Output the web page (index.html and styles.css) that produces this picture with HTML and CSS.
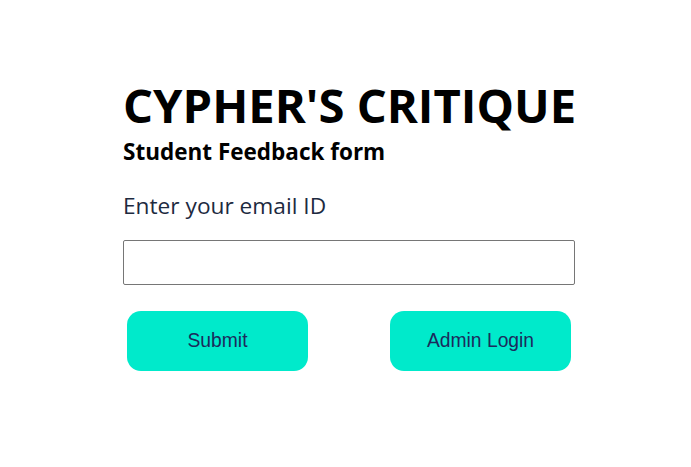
FILE: index.html
```html
<!DOCTYPE html>
<html>
<head>
<meta charset="utf-8">
<link rel="stylesheet" href="styles.css">
</head>
<body>
<main class="page">
  <section class="card">
    <h1 class="title">CYPHER'S CRITIQUE</h1>
    <h2 class="subtitle">Student Feedback form</h2>
    <label class="label" for="email">Enter your email ID</label>
    <input class="input" id="email" type="text">
    <div class="actions">
      <button class="btn">Submit</button>
      <button class="btn">Admin Login</button>
    </div>
  </section>
</main>
</body>
</html>
```
FILE: styles.css
```css
html, body {
  margin: 0;
  padding: 0;
  background: #ffffff;
}
.page {
  padding: 75px 0 0 123px;
}
.card {
  width: 452px;
  display: flex;
  flex-direction: column;
  font-family: "Open Sans", "Noto Sans", sans-serif;
}
.title {
  margin: 0;
  font-size: 47.2px;
  font-weight: 700;
  line-height: 60px;
  color: #000;
  white-space: nowrap;
}
.subtitle {
  margin: 2px 0 0;
  font-size: 22.5px;
  font-weight: 700;
  line-height: 30px;
  color: #000;
}
.label {
  margin-top: 24px;
  font-size: 22.7px;
  line-height: 30px;
  color: #1d2a3f;
}
.input {
  margin-top: 19px;
  box-sizing: border-box;
  height: 45px;
  width: 452px;
  border: 1px solid #767676;
  border-radius: 2px;
  padding: 0 8px;
}
.actions {
  display: flex;
  justify-content: space-between;
  padding: 0 4px;
  margin-top: 26px;
}
.btn {
  width: 181px;
  height: 60px;
  border: none;
  border-radius: 14px;
  background: #00eacb;
  color: #1c2b5c;
  font-family: "Liberation Sans", Arial, sans-serif;
  font-size: 19.3px;
}
```
